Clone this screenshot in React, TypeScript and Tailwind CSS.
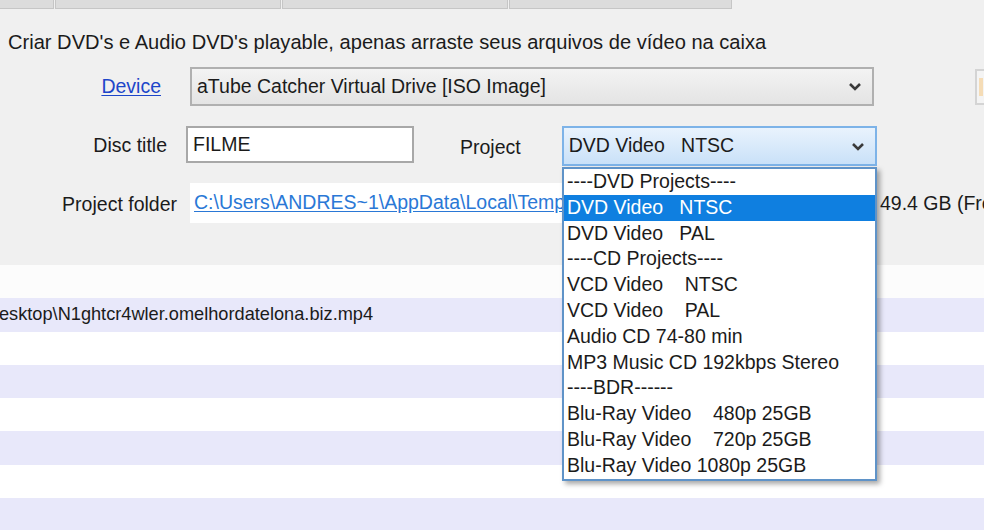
import React from 'react';

const projectOptions = [
  '----DVD Projects----',
  'DVD Video   NTSC',
  'DVD Video   PAL',
  '----CD Projects----',
  'VCD Video    NTSC',
  'VCD Video    PAL',
  'Audio CD 74-80 min',
  'MP3 Music CD 192kbps Stereo',
  '----BDR------',
  'Blu-Ray Video    480p 25GB',
  'Blu-Ray Video    720p 25GB',
  'Blu-Ray Video 1080p 25GB',
];

function Chevron() {
  return (
    <svg width="14" height="9" viewBox="0 0 14 9" className="shrink-0">
      <polyline points="2,2 7,7 12,2" fill="none" stroke="#3a3a3a" strokeWidth="2.6" />
    </svg>
  );
}

export default function App() {
  return (
    <div className="relative w-[984px] h-[530px] overflow-hidden bg-[#f0f0f0] text-[#1b1b1b] font-['Liberation_Sans',Arial,sans-serif]">
      {/* Top form area */}
      <div className="h-[265px] flex flex-col">
        {/* Tabs (cut off at top) */}
        <div className="h-[9px] flex">
          <div className="w-[54px] shrink-0 h-full bg-[#dcdcdc] border-b border-r border-[#c6c6c6]" />
          <div className="w-[226px] shrink-0 h-full bg-[#dcdcdc] border-b border-x border-[#c6c6c6] ml-[1px]" />
          <div className="w-[226px] shrink-0 h-full bg-[#dcdcdc] border-b border-x border-[#c6c6c6] ml-[1px]" />
          <div className="w-[223px] shrink-0 h-full bg-[#dcdcdc] border-b border-x border-[#c6c6c6] ml-[1px]" />
        </div>

        {/* Description */}
        <div className="mt-[20px] pl-[8px] h-[26px] leading-[26px] text-[20.1px] whitespace-nowrap">
          Criar DVD's e Audio DVD's playable, apenas arraste seus arquivos de vídeo na caixa
        </div>

        {/* Device */}
        <div className="mt-[12px] flex items-center h-[39px]">
          <div className="w-[161px] shrink-0 text-right text-[19.5px] text-[#1d46c9] underline underline-offset-2">Device</div>
          <div className="ml-[29px] w-[684px] shrink-0 h-[39px] border-2 border-[#b0b0b0] bg-gradient-to-b from-[#f3f3f3] to-[#e4e4e4] flex items-center justify-between pl-[5px] pr-[10px] text-[19.5px] whitespace-nowrap">
            <span>aTube Catcher Virtual Drive [ISO Image]</span>
            <Chevron />
          </div>
          <div className="ml-auto w-[9px] shrink-0 h-[36px] border-2 border-r-0 border-[#d4d4d4] bg-[#f4f4f4] flex items-center pl-[2px]">
            <div className="w-[4px] h-[18px] bg-[#f5dcb6]" />
          </div>
        </div>

        {/* Disc title / Project */}
        <div className="mt-[20px] flex items-center h-[40px] text-[19.5px]">
          <div className="w-[167px] shrink-0 text-right">Disc title</div>
          <div className="ml-[19px] w-[228px] shrink-0 h-[37px] self-start border-2 border-[#a8a8a8] bg-white flex items-center pl-[5px]">
            FILME
          </div>
          <div className="ml-[46px] mt-[3px] shrink-0">Project</div>
          <div className="ml-[41px] w-[315px] shrink-0 h-[40px] border-2 border-[#7db3e8] bg-gradient-to-b from-[#e9f3fd] to-[#c9e1f8] flex items-center justify-between pl-[5px] pr-[10px] whitespace-pre">
            <span>DVD Video   NTSC</span>
            <Chevron />
          </div>
        </div>

        {/* Project folder */}
        <div className="mt-[17px] flex items-center h-[40px] text-[19.5px]">
          <div className="w-[177px] shrink-0 text-right mt-[4px]">Project folder</div>
          <div className="ml-[13px] w-[372px] shrink-0 h-[40px] bg-white flex items-center pl-[4px] whitespace-nowrap overflow-hidden">
            <span className="text-[#2a78d6] underline underline-offset-2">
              C:\Users\ANDRES~1\AppData\Local\Temp
            </span>
          </div>
          <div className="ml-[318px] shrink-0 mt-[2px] whitespace-nowrap">49.4 GB (Free)</div>
        </div>
      </div>

      {/* File list */}
      <div className="flex flex-col">
        <div className="h-[33.3px] bg-[#fcfcfc]" />
        <div className="h-[33.3px] bg-[#e8e8fa] flex items-center text-[18.2px] whitespace-nowrap -ml-[1px]">
          esktop\N1ghtcr4wler.omelhordatelona.biz.mp4
        </div>
        <div className="h-[33.3px] bg-white" />
        <div className="h-[33.3px] bg-[#e8e8fa]" />
        <div className="h-[33.3px] bg-white" />
        <div className="h-[33.3px] bg-[#e8e8fa]" />
        <div className="h-[33.3px] bg-white" />
        <div className="h-[33.3px] bg-[#e8e8fa]" />
      </div>

      {/* Open project dropdown list */}
      <div className="absolute left-[562px] top-[167px] w-[315px] border-2 border-[#5f93c8] bg-white shadow-[3px_3px_5px_rgba(0,0,0,0.35)] text-[19.5px]">
        {projectOptions.map((opt, i) => (
          <div
            key={opt}
            className={
              i === 1
                ? 'h-[25.8px] leading-[25.8px] pl-[3px] whitespace-pre bg-[#0f7fe0] text-white'
                : 'h-[25.8px] leading-[25.8px] pl-[3px] whitespace-pre'
            }
          >
            {opt}
          </div>
        ))}
      </div>
    </div>
  );
}
